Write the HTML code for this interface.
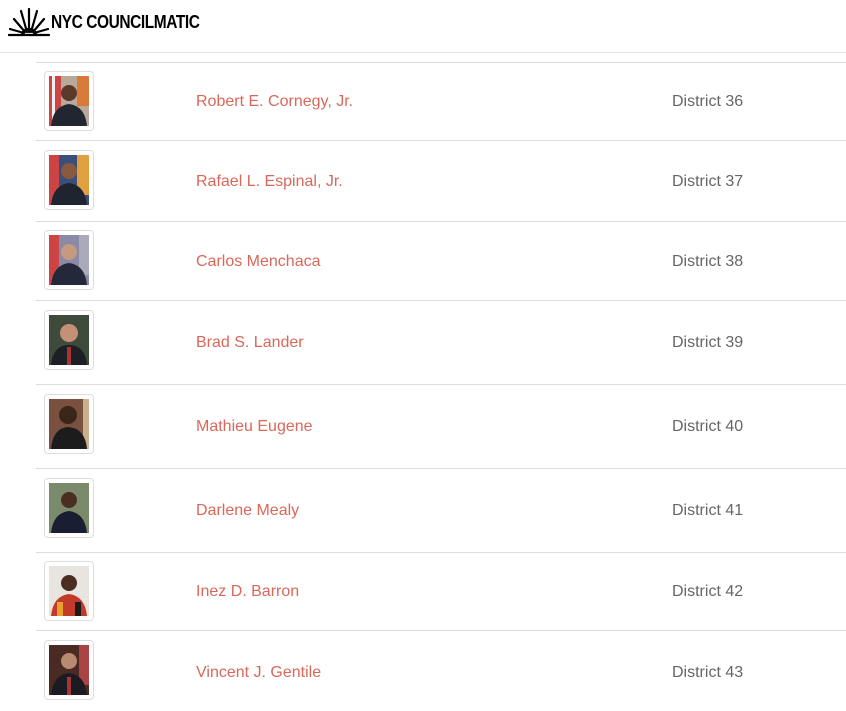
<!DOCTYPE html>
<html><head><meta charset="utf-8"><style>
body{margin:0;width:846px;height:711px;overflow:hidden;background:#fff;font-family:"Liberation Sans",sans-serif;position:relative}
.hdr{position:absolute;left:0;top:0;width:846px;height:52px;background:#fff;border-bottom:1px solid #e6e6e6;z-index:5}
.logo{position:absolute;left:51px;top:12px;font-size:18px;font-weight:bold;color:#000;letter-spacing:-0.5px;transform:scaleX(0.86);transform-origin:left}
.line{position:absolute;left:36px;width:810px;height:1px;background:#ddd}
.th{position:absolute;left:44px;width:48px;height:58px;border:1px solid #ddd;border-radius:4px;background:#fff}
.th svg{position:absolute;left:4px;top:4px}
.nm{position:absolute;left:196px;font-size:16px;color:#d9685a}
.ds{position:absolute;left:672px;font-size:16px;color:#666}
</style></head><body>
<div class="hdr">
<svg style="position:absolute;left:8px;top:7px" width="42" height="30" viewBox="0 0 42 30">
<g stroke="#000" stroke-width="2.2" stroke-linecap="round" fill="none">
<line x1="21" y1="25" x2="21" y2="2"/>
<line x1="19" y1="25" x2="13" y2="4"/>
<line x1="23" y1="25" x2="29" y2="4"/>
<line x1="17" y1="25" x2="6" y2="12"/>
<line x1="25" y1="25" x2="36" y2="12"/>
<line x1="16" y1="26" x2="2" y2="22"/>
<line x1="26" y1="26" x2="40" y2="22"/>
<line x1="1" y1="28" x2="41" y2="28"/>
<path d="M14 28 A7 6 0 0 1 28 28"/>
</g></svg>
<div class="logo">NYC COUNCILMATIC</div>
</div>
<div class="th" style="top:-10px"></div>
<div class="line" style="top:62px"></div>
<div class="line" style="top:140px"></div>
<div class="line" style="top:221px"></div>
<div class="line" style="top:300px"></div>
<div class="line" style="top:384px"></div>
<div class="line" style="top:468px"></div>
<div class="line" style="top:552px"></div>
<div class="line" style="top:630px"></div>

<div class="th" style="top:71px"><svg width="40" height="50"><rect width="40" height="50" fill="#b9a99a"/><rect width="12" height="50" fill="#c44"/><rect x="3" width="3" height="50" fill="#eee"/><rect x="28" width="12" height="30" fill="#d77a3a"/><circle cx="20" cy="17" r="8" fill="#5a3a2a"/><path d="M2 50 Q4 30 20 28 Q36 30 38 50Z" fill="#222630"/></svg></div>
<div class="nm" style="top:93px">Robert E. Cornegy, Jr.</div><div class="ds" style="top:93px">District 36</div>

<div class="th" style="top:150px"><svg width="40" height="50"><rect width="40" height="50" fill="#3a4f7a"/><rect width="10" height="50" fill="#c44"/><rect x="28" width="12" height="40" fill="#e0a040"/><circle cx="20" cy="16" r="8" fill="#8a5a40"/><path d="M2 50 Q4 30 20 28 Q36 30 38 50Z" fill="#1e2430"/></svg></div>
<div class="nm" style="top:173px">Rafael L. Espinal, Jr.</div><div class="ds" style="top:173px">District 37</div>

<div class="th" style="top:230px"><svg width="40" height="50"><rect width="40" height="50" fill="#8a8aa6"/><rect width="10" height="50" fill="#c44"/><rect x="30" width="10" height="40" fill="#aab"/><circle cx="20" cy="17" r="8" fill="#c49a80"/><path d="M2 50 Q4 30 20 28 Q36 30 38 50Z" fill="#23283a"/></svg></div>
<div class="nm" style="top:253px">Carlos Menchaca</div><div class="ds" style="top:253px">District 38</div>

<div class="th" style="top:310px"><svg width="40" height="50"><rect width="40" height="50" fill="#3e4a3a"/><circle cx="20" cy="18" r="9" fill="#c49077"/><path d="M2 50 Q4 30 20 30 Q36 30 38 50Z" fill="#1c1f26"/><rect x="18" y="32" width="4" height="18" fill="#a33"/></svg></div>
<div class="nm" style="top:334px">Brad S. Lander</div><div class="ds" style="top:334px">District 39</div>

<div class="th" style="top:394px"><svg width="40" height="50"><rect width="40" height="50" fill="#7a5040"/><rect x="34" width="6" height="50" fill="#c9b08a"/><circle cx="19" cy="16" r="9" fill="#3a2518"/><path d="M2 50 Q4 29 19 28 Q36 29 38 50Z" fill="#1c1c1c"/></svg></div>
<div class="nm" style="top:418px">Mathieu Eugene</div><div class="ds" style="top:418px">District 40</div>

<div class="th" style="top:478px"><svg width="40" height="50"><rect width="40" height="50" fill="#7a8a6a"/><circle cx="20" cy="17" r="8" fill="#4a2e22"/><path d="M2 50 Q4 30 20 28 Q36 30 38 50Z" fill="#1a1e32"/></svg></div>
<div class="nm" style="top:502px">Darlene Mealy</div><div class="ds" style="top:502px">District 41</div>

<div class="th" style="top:561px"><svg width="40" height="50"><rect width="40" height="50" fill="#e8e4e0"/><circle cx="20" cy="17" r="8" fill="#4a2e22"/><path d="M2 50 Q4 30 20 28 Q36 30 38 50Z" fill="#c23a2a"/><rect x="8" y="36" width="6" height="14" fill="#e8a030"/><rect x="26" y="36" width="6" height="14" fill="#1a1a1a"/></svg></div>
<div class="nm" style="top:583px">Inez D. Barron</div><div class="ds" style="top:583px">District 42</div>

<div class="th" style="top:640px"><svg width="40" height="50"><rect width="40" height="50" fill="#4a2a22"/><rect x="30" width="10" height="40" fill="#a44"/><circle cx="20" cy="16" r="8" fill="#b88a70"/><path d="M2 50 Q4 30 20 28 Q36 30 38 50Z" fill="#1a1c22"/><rect x="18" y="32" width="4" height="18" fill="#a33"/></svg></div>
<div class="nm" style="top:664px">Vincent J. Gentile</div><div class="ds" style="top:664px">District 43</div>
</body></html>
